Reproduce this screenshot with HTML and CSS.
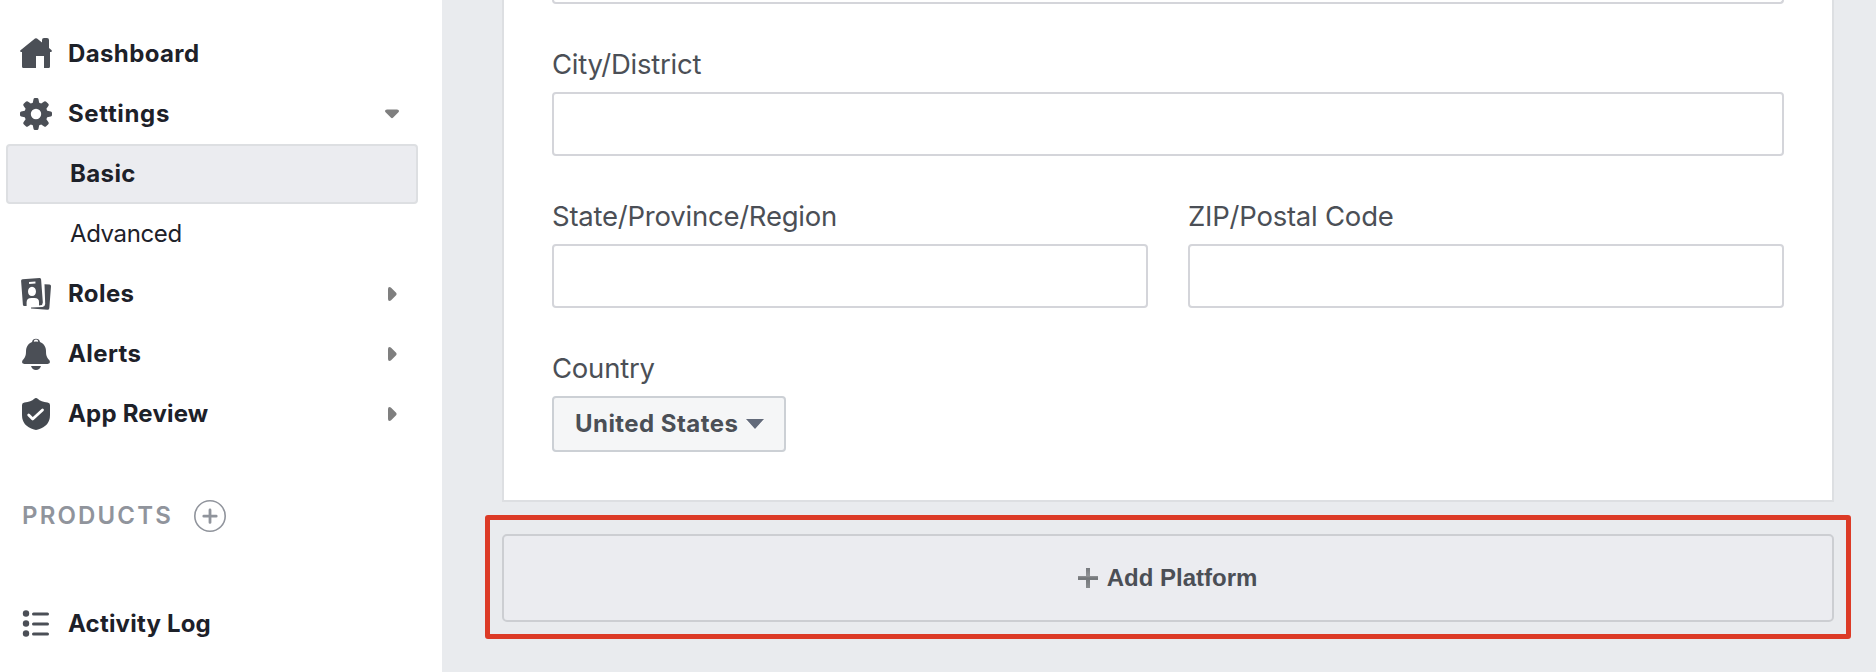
FILE: index.html
```html
<!DOCTYPE html>
<html lang="en">
<head>
<meta charset="utf-8">
<title>App Settings</title>
<link rel="stylesheet" href="styles.css">
</head>
<body>
<nav class="sidebar">
  <a class="row"><svg class="icon" viewBox="0 0 32 32"><path d="M15 .6q1-.8 2 0l5 3.900V2q0-2 2-2h3q2 0 2 2v8l2.400 2q1 1-.2 2H30v14.500q0 1.500-1.500 1.500H24V18h-8v12H3.500Q2 30 2 28.500V14H.8q-1.300-1 0-2z"/></svg><span class="name dashboard">Dashboard</span></a>
  <a class="row"><svg class="icon" viewBox="0 0 32 32"><path fill-rule="evenodd" d="M13.500 1.200Q13.700 0 15 0h2q1.300 0 1.500 1.200l.7 3.600 2 .8 3-2.100q1-.7 2 .2l2.100 2.100q.9 1 .2 2l-2.100 3 .8 2 3.600.7q1.200.2 1.200 1.500v2q0 1.300-1.200 1.500l-3.600.7-.8 2 2.100 3q.7 1-.2 2l-2.100 2.100q-1 .9-2 .2l-3-2.100-2 .8-.7 3.600Q18.300 32 17 32h-2q-1.300 0-1.500-1.200l-.7-3.600-2-.8-3 2.100q-1 .7-2-.2l-2.100-2.100q-.9-1-.2-2l2.100-3-.8-2-3.600-.7Q0 18.300 0 17v-2q0-1.300 1.200-1.500l3.600-.7.8-2-2.100-3q-.7-1 .2-2l2.100-2.100q1-.9 2-.2l3 2.100 2-.8zM16 10.800a5.200 5.200 0 1 0 0 10.400 5.200 5.200 0 0 0 0-10.400z"/></svg><span class="name settings">Settings</span><svg class="caret" viewBox="0 0 14 14"><path d="M2 2.500h10q2 0 2 1.500 0 .8-.8 1.600l-5 5q-1.200 1.200-2.400 0l-5-5Q0 4.800 0 4q0-1.500 2-1.500z"/></svg></a>
  <a class="row sub active"><span class="name">Basic</span></a>
  <a class="row sub"><span class="name regular">Advanced</span></a>
  <a class="row"><svg class="icon" viewBox="0 0 32 32"><path fill-rule="evenodd" d="M2.500 1.300 19.500 0q1.500-.1 1.600 1.400L22.800 24q.2 3-2.500 3.200L19 27.500V24q0-4-4.500-4h-3q-5 0-4.900 4.500V28l-2.100.1Q3 28.200 2.900 26.700L1.100 3Q1 1.400 2.500 1.300zM9 4l.1 2 6.400-.5-.1-2zM12 8.800c-5.300 0-5.300 9.200 0 9.200s5.300-9.200 0-9.200z"/><path d="M24.500 6.200l5 .3q1.600.2 1.500 1.700l-1.700 22q-.2 1.500-1.800 1.500L11 30.500v-.9l11.500-.5q2.500-.3 2.700-3z"/></svg><span class="name">Roles</span><svg class="caret" viewBox="0 0 14 14"><path d="M3 2q0-2 1.500-2 .8 0 1.600.8l5 5q1.200 1.200 0 2.400l-5 5q-.8.800-1.600.8Q3 14 3 12z"/></svg></a>
  <a class="row"><svg class="icon" viewBox="0 0 32 32"><path fill-rule="evenodd" d="M12 4a4.100 4.100 0 0 1 8 0c4 1.600 6 5 6 9.500 0 5 1.500 6.500 3 8.300 1.700 2.200.8 4.200-1.500 4.200h-23c-2.300 0-3.200-2-1.500-4.200 1.500-1.800 3-3.300 3-8.300C6 9 8 5.600 12 4zM13.800 3.700q2.200-.5 4.400 0a2.200 2.200 0 0 0-4.400 0zM11 28h10q-1.300 4-5 4t-5-4z"/></svg><span class="name">Alerts</span><svg class="caret" viewBox="0 0 14 14"><path d="M3 2q0-2 1.500-2 .8 0 1.600.8l5 5q1.200 1.200 0 2.400l-5 5q-.8.800-1.600.8Q3 14 3 12z"/></svg></a>
  <a class="row"><svg class="icon slate" viewBox="0 0 32 32"><path d="M16 0q1 0 1.700.8Q21 4 27.500 4.500 30 4.700 30 7v10q0 11-12 14.500-2 .8-4 0Q2 28 2 17V7q0-2.300 2.500-2.500Q11 4 14.300.8 15 0 16 0z"/><path class="tick" d="M8.700 17l4 4L22.500 12"/></svg><span class="name review">App Review</span><svg class="caret" viewBox="0 0 14 14"><path d="M3 2q0-2 1.500-2 .8 0 1.600.8l5 5q1.200 1.200 0 2.400l-5 5q-.8.800-1.600.8Q3 14 3 12z"/></svg></a>
  <div class="products"><span class="heading">PRODUCTS</span><svg class="add" viewBox="0 0 32 32"><circle cx="16" cy="16" r="15.200"/><path d="M9.800 16.200h12.400M16 10v12.400"/></svg></div>
  <a class="row"><svg class="icon" viewBox="0 0 32 32"><circle cx="6" cy="5.500" r="3.200"/><circle cx="6" cy="15.500" r="3.200"/><circle cx="6" cy="25.500" r="3.200"/><path class="lines" d="M13.500 6h14M13.500 16h14M13.500 26h14"/></svg><span class="name review">Activity Log</span></a>
</nav>
<main class="main">
  <section class="card">
    <div class="input cut"></div>
    <div class="field"><label class="label">City/District</label><div class="input"></div></div>
    <div class="pair">
      <div class="field"><label class="label">State/Province/Region</label><div class="input"></div></div>
      <div class="field"><label class="label">ZIP/Postal Code</label><div class="input"></div></div>
    </div>
    <div class="field"><label class="label">Country</label>
      <button class="select"><span class="value">United States</span><svg class="arrow" viewBox="0 0 18 11"><path class="glow" d="M0 1h18L9 11z"/><path d="M0 0h18L9 10z"/></svg></button>
    </div>
  </section>
  <div class="highlight">
    <button class="platform"><svg class="plus" viewBox="0 0 20 20"><defs><linearGradient id="metal" x1="0" y1="0" x2="0" y2="1"><stop offset="0" stop-color="#777a7e"/><stop offset=".4" stop-color="#929497"/><stop offset=".5" stop-color="#74777a"/><stop offset="1" stop-color="#888b8e"/></linearGradient></defs><path fill="url(#metal)" d="M8 0h4v8h8v4h-8v8H8v-8H0V8h8z"/></svg><span>Add Platform</span></button>
  </div>
</main>
</body>
</html>
```
FILE: styles.css
```css
* { box-sizing: border-box; }
body {
  margin: 0;
  display: flex;
  height: 672px;
  overflow: hidden;
  background: #e9ebee;
  font-family: Inter, "Liberation Sans", sans-serif;
}
.sidebar {
  flex: none;
  width: 442px;
  padding: 24px 24px 0 6px;
  background: #fff;
}
.row {
  display: flex;
  align-items: center;
  height: 60px;
  padding: 0 19px 0 14px;
  color: #1d2129;
}
.icon { flex: none; width: 32px; height: 32px; margin-right: 16px; fill: #4b4f56; }
.slate { fill: #444950; }
.tick { fill: none; stroke: #fff; stroke-width: 2.8; stroke-linecap: round; stroke-linejoin: round; }
.lines { stroke: #4b4f56; stroke-width: 3; stroke-linecap: round; }
.name { font-size: 24px; font-weight: 650; line-height: 28px; letter-spacing: .4px; white-space: nowrap; }
.dashboard { letter-spacing: .38px; }
.settings { letter-spacing: .65px; }
.review { letter-spacing: .2px; }
.regular { font-weight: 400; letter-spacing: -.38px; }
.caret { width: 14px; height: 14px; margin-left: auto; fill: #7f7f7f; }
.sub { padding-left: 64px; }
.active { padding-left: 62px; border: 2px solid #dddfe2; border-radius: 4px; background: #ebecf0; }
.products {
  display: flex;
  align-items: center;
  gap: 21px;
  height: 150px;
  padding: 0 0 6px 16px;
}
.heading { color: #90949c; font-size: 24px; font-weight: 600; line-height: 28px; letter-spacing: 2.15px; }
.add { width: 32px; height: 32px; fill: none; stroke: #90949c; stroke-width: 1.6; }
.add path { stroke-width: 2.8; stroke-linecap: round; }
.main { flex: 1; padding: 0 25px 0 43px; }
.card {
  height: 502px;
  margin: 0 17px;
  padding: 0 48px;
  border: 2px solid #dddfe2;
  border-top: 0;
  background: #fff;
}
.input { height: 64px; border: 2px solid #d4d5da; border-radius: 4px; background: #fff; }
.cut { height: 4px; border-top: 0; border-radius: 0 0 4px 4px; }
.field { flex: 1; padding-top: 40px; }
.label {
  display: block;
  height: 48px;
  color: #4b4f56;
  font-size: 27.5px;
  line-height: 40px;
  letter-spacing: -.23px;
  white-space: nowrap;
}
.pair { display: flex; gap: 40px; }
.select {
  display: flex;
  align-items: center;
  gap: 8px;
  width: 234px;
  height: 56px;
  padding: 0 20px 0 21px;
  border: 2px solid #ccd0d5;
  border-radius: 4px;
  background: #f5f6f7;
  color: #4b4f56;
  font: 650 24px/28px Inter, sans-serif;
  white-space: nowrap;
}
.value { letter-spacing: .45px; }
.arrow { flex: none; width: 18px; height: 11px; fill: #626a7a; }
.arrow .glow { fill: #fff; }
.highlight {
  height: 124px;
  margin-top: 13px;
  padding: 14px 12px 12px;
  border: 5px solid #dc3a26;
  border-radius: 3px;
}
.platform {
  display: flex;
  align-items: center;
  justify-content: center;
  gap: 9px;
  width: 100%;
  height: 88px;
  padding: 0 7px 0 6px;
  border: 2px solid #ccced2;
  border-radius: 5px;
  background: #ebecf0;
  color: #4b4f56;
  font: bold 24px "Liberation Sans", sans-serif;
}
.plus { width: 20px; height: 20px; }
```
